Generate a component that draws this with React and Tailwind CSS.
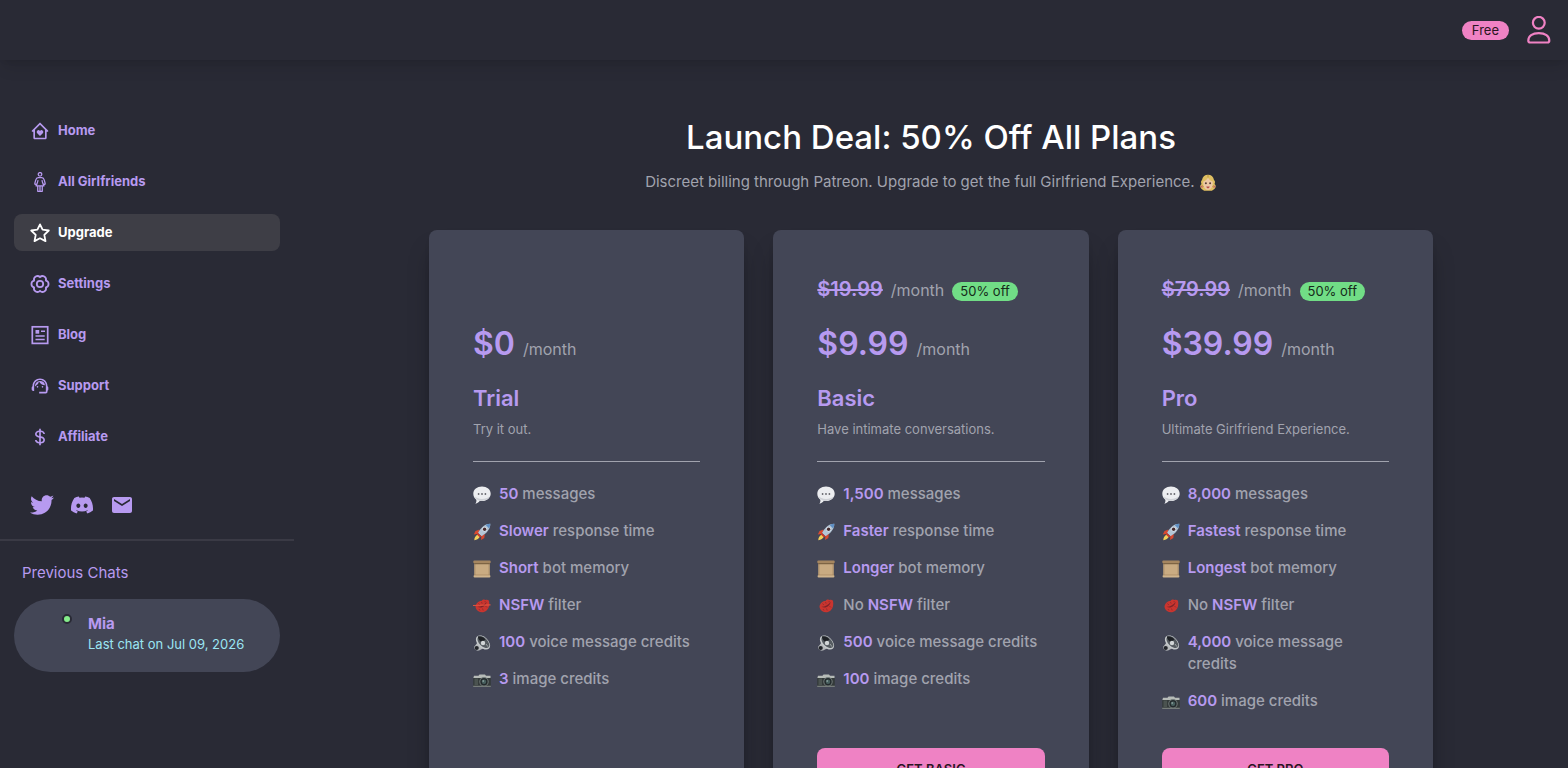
import { BiHomeHeart, BiDollar } from 'react-icons/bi'
import { MdSupportAgent, MdEmail } from 'react-icons/md'
import { FaTwitter, FaDiscord } from 'react-icons/fa'

const WomanIcon = ({ className }) => (
  <svg viewBox="0 0 20 22" className={className} fill="none" stroke="currentColor" strokeWidth="1.4" strokeLinejoin="round" aria-hidden="true">
    <circle cx="10" cy="2.600" r="2" />
    <path d="M8 6.200h4c1.600 0 2.300 1.200 2.700 2.700l1 3.600c.2 1.300-1.100 1.700-1.600.5M8 6.200c-1.600 0-2.300 1.200-2.700 2.700l-1 3.600c-.2 1.300 1.100 1.700 1.600.5" />
    <path d="M7.700 9c.2 1.900-1.100 3.900-2 6.300h8.600c-.9-2.400-2.200-4.400-2-6.300" />
    <path d="M7.500 15.300v6h5v-6M10 15.300v6" />
  </svg>
)

const StarIcon = ({ className }) => (
  <svg viewBox="0 0 20 20" className={className} fill="none" stroke="currentColor" strokeWidth="1.800" strokeLinejoin="round" aria-hidden="true">
    <path d="M10 1.400l2.600 5.300 6.200.8-4.500 4.300 1.200 6.300-5.500-2.800-5.500 2.800 1.200-6.300L1.200 7.500l6.200-.8z" />
  </svg>
)

const GearIcon = ({ className }) => (
  <svg viewBox="0 0 20 20" className={className} fill="none" stroke="currentColor" strokeWidth="1.800" strokeLinejoin="round" aria-hidden="true">
    <path d="M10 3.200A3.500 3.500 0 0 1 15.890 6.600A3.500 3.500 0 0 1 15.890 13.400A3.500 3.500 0 0 1 10 16.800A3.500 3.500 0 0 1 4.110 13.400A3.500 3.500 0 0 1 4.110 6.600A3.500 3.500 0 0 1 10 3.200z" />
    <circle cx="10" cy="10" r="3.200" />
  </svg>
)

const ArticleIcon = ({ className }) => (
  <svg viewBox="0 0 20 20" className={className} fill="none" stroke="currentColor" strokeWidth="1.500" aria-hidden="true">
    <rect x="2.300" y="1.800" width="15.400" height="16.600" strokeWidth="1.700" />
    <path d="M5.500 5h3.700v3.700H5.500z" fill="currentColor" stroke="none" />
    <path d="M11 6.300h4M5.500 11h9.200M5.500 14.500h9.200" />
  </svg>
)

const UserIcon = () => (
  <svg viewBox="0 0 24 28" className="h-7 w-6" fill="none" stroke="currentColor" strokeWidth="2.200" aria-hidden="true">
    <circle cx="11.800" cy="6.800" r="5.900" />
    <path d="M1.300 24.800C1.300 20 5.300 17.200 11.800 17.200S22.300 20 22.300 24.800Q22.300 26.500 20.400 26.500H3.200Q1.300 26.500 1.300 24.800z" />
  </svg>
)

const navItems = [
  { label: 'Home', icon: BiHomeHeart },
  { label: 'All Girlfriends', icon: WomanIcon },
  { label: 'Upgrade', icon: StarIcon, active: true },
  { label: 'Settings', icon: GearIcon },
  { label: 'Blog', icon: ArticleIcon },
  { label: 'Support', icon: MdSupportAgent },
  { label: 'Affiliate', icon: BiDollar }
]

const socials = [
  { label: 'Twitter', icon: FaTwitter },
  { label: 'Discord', icon: FaDiscord },
  { label: 'Email', icon: MdEmail }
]

const plans = [
  {
    name: 'Trial',
    price: '$0',
    tagline: 'Try it out.',
    features: [
      { icon: 'speech', strong: '50', text: 'messages' },
      { icon: 'rocket', strong: 'Slower', text: 'response time' },
      { icon: 'scroll', strong: 'Short', text: 'bot memory' },
      { icon: 'noLips', strong: 'NSFW', text: 'filter' },
      { icon: 'speaker', strong: '100', text: 'voice message credits' },
      { icon: 'camera', strong: '3', text: 'image credits' }
    ]
  },
  {
    name: 'Basic',
    price: '$9.99',
    oldPrice: '$19.99',
    tagline: 'Have intimate conversations.',
    cta: 'GET BASIC',
    features: [
      { icon: 'speech', strong: '1,500', text: 'messages' },
      { icon: 'rocket', strong: 'Faster', text: 'response time' },
      { icon: 'scroll', strong: 'Longer', text: 'bot memory' },
      { icon: 'lips', before: 'No', strong: 'NSFW', text: 'filter' },
      { icon: 'speaker', strong: '500', text: 'voice message credits' },
      { icon: 'camera', strong: '100', text: 'image credits' }
    ]
  },
  {
    name: 'Pro',
    price: '$39.99',
    oldPrice: '$79.99',
    tagline: 'Ultimate Girlfriend Experience.',
    cta: 'GET PRO',
    features: [
      { icon: 'speech', strong: '8,000', text: 'messages' },
      { icon: 'rocket', strong: 'Fastest', text: 'response time' },
      { icon: 'scroll', strong: 'Longest', text: 'bot memory' },
      { icon: 'lips', before: 'No', strong: 'NSFW', text: 'filter' },
      { icon: 'speaker', strong: '4,000', text: 'voice message credits' },
      { icon: 'camera', strong: '600', text: 'image credits' }
    ]
  }
]

const Lips = () => (
  <>
    <path d="M2.500 9.500C3 6.200 5.500 3.600 8.500 3.900c1.200-1.600 2.900-1.700 4-.9 1.400-.4 2.700-.1 3.500.7.7 3.800.2 7.400-2.400 9.800-2.500 2.200-6 2.300-8.600.4C3.500 12.900 2.500 11.300 2.500 9.500z" fill="#c9352f" />
    <path d="M4.500 9.800c3 .2 6.500-1.800 9.200-4.800-.7 3.700-4.700 7-9.200 4.800z" fill="#7f2429" />
    <path d="M5.500 6.500l1.300 1.500M8.500 5l.7 1.700M12 4l.2 1.300M6 12l1 1.500M9.500 11.500l.7 2M12.500 9l1.500 1.500" stroke="#8f2a2b" strokeWidth=".8" />
  </>
)

const drawings = {
  speech: (
    <>
      <path d="M9 .5c4.900 0 8.700 3.100 8.700 7.200S13.900 15 9 15c-.8 0-1.500-.1-2.200-.2-.8 1.400-2.300 2.500-4.500 2.900.9-1 1.300-2.500 1-4C1.500 12.400.3 10.200.3 7.700.3 3.600 4.100.5 9 .5z" fill="#ecedf0" />
      <path d="M1.500 10c2.200 3.300 11 4.300 15.200.2-1.200 3-4.300 4.500-7.700 4.700-4 .1-6.500-1.900-7.500-4.900z" fill="#cfd1d6" />
      <g fill="#66666c">
        <circle cx="5.600" cy="8" r=".9" />
        <circle cx="9" cy="8" r=".9" />
        <circle cx="12.400" cy="8" r=".9" />
      </g>
    </>
  ),
  rocket: (
    <>
      <path d="M4.500 11.500l2.500 2c-.8 1.700-3 3.600-5.700 3.800-.1-2.300 1.200-4.500 3.200-5.800z" fill="#f3d15b" />
      <path d="M6.500 6.500L2.500 8 .8 11.400l4.500-.7zM11.800 11l-.5 4-3.200 2 .3-4.500z" fill="#d84a31" />
      <path d="M17.300.8c.2 4.500-2.800 9-8.800 12.400L5 9.900C8.200 4 12.500.8 17.300.8z" fill="#b4c6d6" />
      <path d="M17.300.8c-1.600 0-3.200.4-4.700 1.200l3.500 3.500c.8-1.500 1.200-3.100 1.200-4.700z" fill="#5e8fc4" />
      <path d="M5 9.900l3.500 3.300-1.800 1.100-2.900-2.700z" fill="#c83b2b" />
      <circle cx="11.600" cy="6.300" r="2.300" fill="#e8eaf0" />
      <circle cx="11.600" cy="6.300" r="1.700" fill="#462b2d" />
    </>
  ),
  scroll: (
    <>
      <path d="M1.200 2.500h15.600v13H1.200z" fill="#bd9f77" />
      <path d="M3 4h12v11H3z" fill="#c9ab82" />
      <rect x=".3" y=".6" width="17.400" height="2.600" rx="1" fill="#a58660" />
      <path d="M1.200 3.200h15.600v1H1.200z" fill="#6f5739" />
      <rect x=".6" y="15" width="16.800" height="2.400" rx="1" fill="#cfb48d" />
      <path d="M1.200 15h15.600" stroke="#95774f" strokeWidth=".5" />
    </>
  ),
  lips: <Lips />,
  noLips: (
    <>
      <Lips />
      <path d="M0 8.500L17.500 7.800" stroke="#e0523f" strokeWidth="1.200" />
    </>
  ),
  speaker: (
    <>
      <path d="M1 13l4-5 6 6-5 2.500c-2.600.6-4.700-.9-5-3.500z" fill="#b6b9bb" />
      <circle cx="3.700" cy="14" r="2.100" fill="#22252a" />
      <ellipse cx="10" cy="8.500" rx="8.500" ry="5.300" transform="rotate(45 10 8.500)" fill="#c4c8ca" />
      <ellipse cx="10.400" cy="8.100" rx="7.300" ry="4.200" transform="rotate(45 10.400 8.100)" fill="#555b60" />
      <path d="M4.800 2.500c2.300-.6 5.500.5 7.600 2.800L9.400 8.600C6.900 7.300 5 5 4.800 2.500z" fill="#1e2125" />
      <circle cx="10" cy="9" r="2.200" fill="#d2d6d7" />
      <path d="M13 10l2 2.700" stroke="#9ca2a5" />
    </>
  ),
  camera: (
    <>
      <path d="M1 4.800h4.500L6.500 3.600h5.500l1 1.200h4.500V7.300H.3z" fill="#b6bbb7" />
      <path d="M.2 7h17.600v8.500H.2z" fill="#343a3a" />
      <path d="M.2 14.700h17.600V16H.2z" fill="#777d7b" />
      <path d="M1.500 7.500H5V14H1.500z" fill="#4b5350" />
      <circle cx="11" cy="10.800" r="4.700" fill="#727b7a" />
      <circle cx="11" cy="10.800" r="3.700" fill="#242b2d" />
      <circle cx="11" cy="10.800" r="2.200" fill="#48605f" />
      <circle cx="10.200" cy="10" r=".8" fill="#a6b9b5" />
    </>
  )
}

const FeatureIcon = ({ name }) => (
  <svg viewBox="0 0 18 18" className="mt-[3px] size-[18px] shrink-0" fill="none" aria-hidden="true">
    {drawings[name]}
  </svg>
)

const GirlFace = () => (
  <svg viewBox="0 0 18 18" className="inline-block size-[18px]" aria-hidden="true">
    <path d="M3 6C3.500 2.500 6 .7 9 .7s5.500 1.800 6 5.300c1.500 1 1 3 .5 4 1.500 1 1.700 3 .3 4.500-.8 1-2.300 1.500-2.800 2.300H5c-.5-.8-2-1.300-2.800-2.300C.8 13 1 11 2.500 10 2 9 1.500 7 3 6z" fill="#dfbf62" />
    <path d="M4.300 7.500C6.500 7 8 5.500 9 3.500c1 2 2.500 3.500 4.700 4 .5 4.700-1.700 8.500-4.700 8.500S3.800 12.200 4.300 7.500z" fill="#edc8a6" />
    <path d="M9 .8v2.800M3 11.500l1.500 1M15 11.500l-1.500 1" stroke="#a98331" strokeWidth=".7" />
    <circle cx="6.900" cy="9.300" r="1" fill="#583e35" />
    <circle cx="11.100" cy="9.300" r="1" fill="#583e35" />
    <path d="M7.300 12.500h3.400c-.3 1.300-1 1.800-1.700 1.800s-1.400-.5-1.700-1.800z" fill="#b4504a" />
    <path d="M2 12l1.500 1.500M16 12l-1.500 1.500" stroke="#c65c6c" strokeWidth="1.200" />
  </svg>
)

const Header = () => (
  <header className="relative flex h-[60px] items-center justify-end gap-[18px] bg-[#292a35] px-[17px] shadow-lg shadow-black/10">
    <span className="rounded-full bg-[#ef82c4] px-2.5 text-[13px] leading-[19px] text-[#2a1522]">Free</span>
    <button type="button" aria-label="Account" className="text-[#ef82c4]">
      <UserIcon />
    </button>
  </header>
)

const Sidebar = () => (
  <aside className="w-[294px] shrink-0 pt-[52px] text-[#b79af0]">
    <nav className="flex flex-col gap-[14px] px-[14px]">
      {navItems.map(({ label, icon: Icon, active }) => (
        <a
          key={label}
          href="#"
          className={`flex h-[37px] items-center gap-2 rounded-lg px-4 text-[13px] font-bold ${active ? 'bg-[#3e3e46] text-white' : ''}`}
        >
          <Icon className="size-5" />
          {label}
        </a>
      ))}
    </nav>

    <div className="mt-[38px] flex items-center gap-4 px-[30px]">
      {socials.map(({ label, icon: Icon }) => (
        <a key={label} href="#" aria-label={label}>
          <Icon className="size-6" />
        </a>
      ))}
    </div>

    <hr className="mt-[22px] border-t-2 border-[#3a3a45]" />

    <h2 className="mt-5 px-[22px] text-[15px] leading-6">Previous Chats</h2>
    <a href="#" className="mx-[14px] mt-[14px] flex h-[73px] rounded-full bg-[#434656] pt-[15px] pl-[48px]">
      <span className="size-[10px] rounded-full border-2 border-[#292a35] bg-[#85ee8b]" />
      <span className="ml-4 flex flex-col">
        <span className="text-[15px] leading-5 font-bold">Mia</span>
        <span className="text-[13px] leading-5 text-[#9be5f3]">Last chat on Jul 09, 2026</span>
      </span>
    </a>
  </aside>
)

const PlanCard = ({ plan }) => (
  <div className="flex flex-col rounded-lg bg-[#434656] px-[44px] pt-[43px] pb-11 text-[#a1a3ae] shadow-xl shadow-black/35">
    <div className="flex h-[30px] items-baseline gap-2">
      {plan.oldPrice && (
        <>
          <span className="text-[20px] leading-8 font-semibold text-[#b79af0] line-through">{plan.oldPrice}</span>
          <span className="text-base">/month</span>
          <span className="rounded-full bg-[#71dd86] px-2 text-[13px] leading-[19px] text-[#152a1a]">50% off</span>
        </>
      )}
    </div>
    <div className="mt-[18px] flex items-baseline gap-2">
      <span className="text-[32px] leading-[46px] font-semibold text-[#b79af0]">{plan.price}</span>
      <span className="text-base">/month</span>
    </div>
    <h2 className="mt-4 text-[22px] leading-[30px] font-semibold text-[#b79af0]">{plan.name}</h2>
    <p className="mt-[6px] text-[13px] leading-5">{plan.tagline}</p>
    <hr className="mt-[22px] border-[#a1a3ae]" />
    <ul className="mt-[21px] flex flex-col gap-[15px] text-[15px] font-medium">
      {plan.features.map((f) => (
        <li key={f.icon} className="flex gap-2 leading-[22px]">
          <FeatureIcon name={f.icon} />
          <span>
            {f.before && `${f.before} `}
            <span className="font-semibold text-[#b79af0]">{f.strong}</span> {f.text}
          </span>
        </li>
      ))}
    </ul>
    {plan.cta && (
      <div className="mt-auto pt-9">
        <button type="button" className="h-11 w-full rounded-lg bg-[#ef82c4] text-[13px] font-semibold text-[#2a1522]">
          {plan.cta}
        </button>
      </div>
    )}
  </div>
)

const App = () => {
  return (
    <div className="min-h-screen bg-[#292a35] font-['Inter',sans-serif]">
      <Header />
      <div className="flex">
        <Sidebar />
        <main className="flex-1 px-4 pt-[54px] pb-16">
          <h1 className="text-center text-[33px] leading-[46px] font-medium text-white">Launch Deal: 50% Off All Plans</h1>
          <p className="mt-[10px] text-center text-[15px] leading-6 text-[#a1a3ae]">
            Discreet billing through Patreon. Upgrade to get the full Girlfriend Experience. <GirlFace />
          </p>
          <div className="mx-auto mt-9 grid max-w-[1004px] grid-cols-3 gap-[29px]">
            {plans.map((plan) => (
              <PlanCard key={plan.name} plan={plan} />
            ))}
          </div>
        </main>
      </div>
    </div>
  )
}

export default App
